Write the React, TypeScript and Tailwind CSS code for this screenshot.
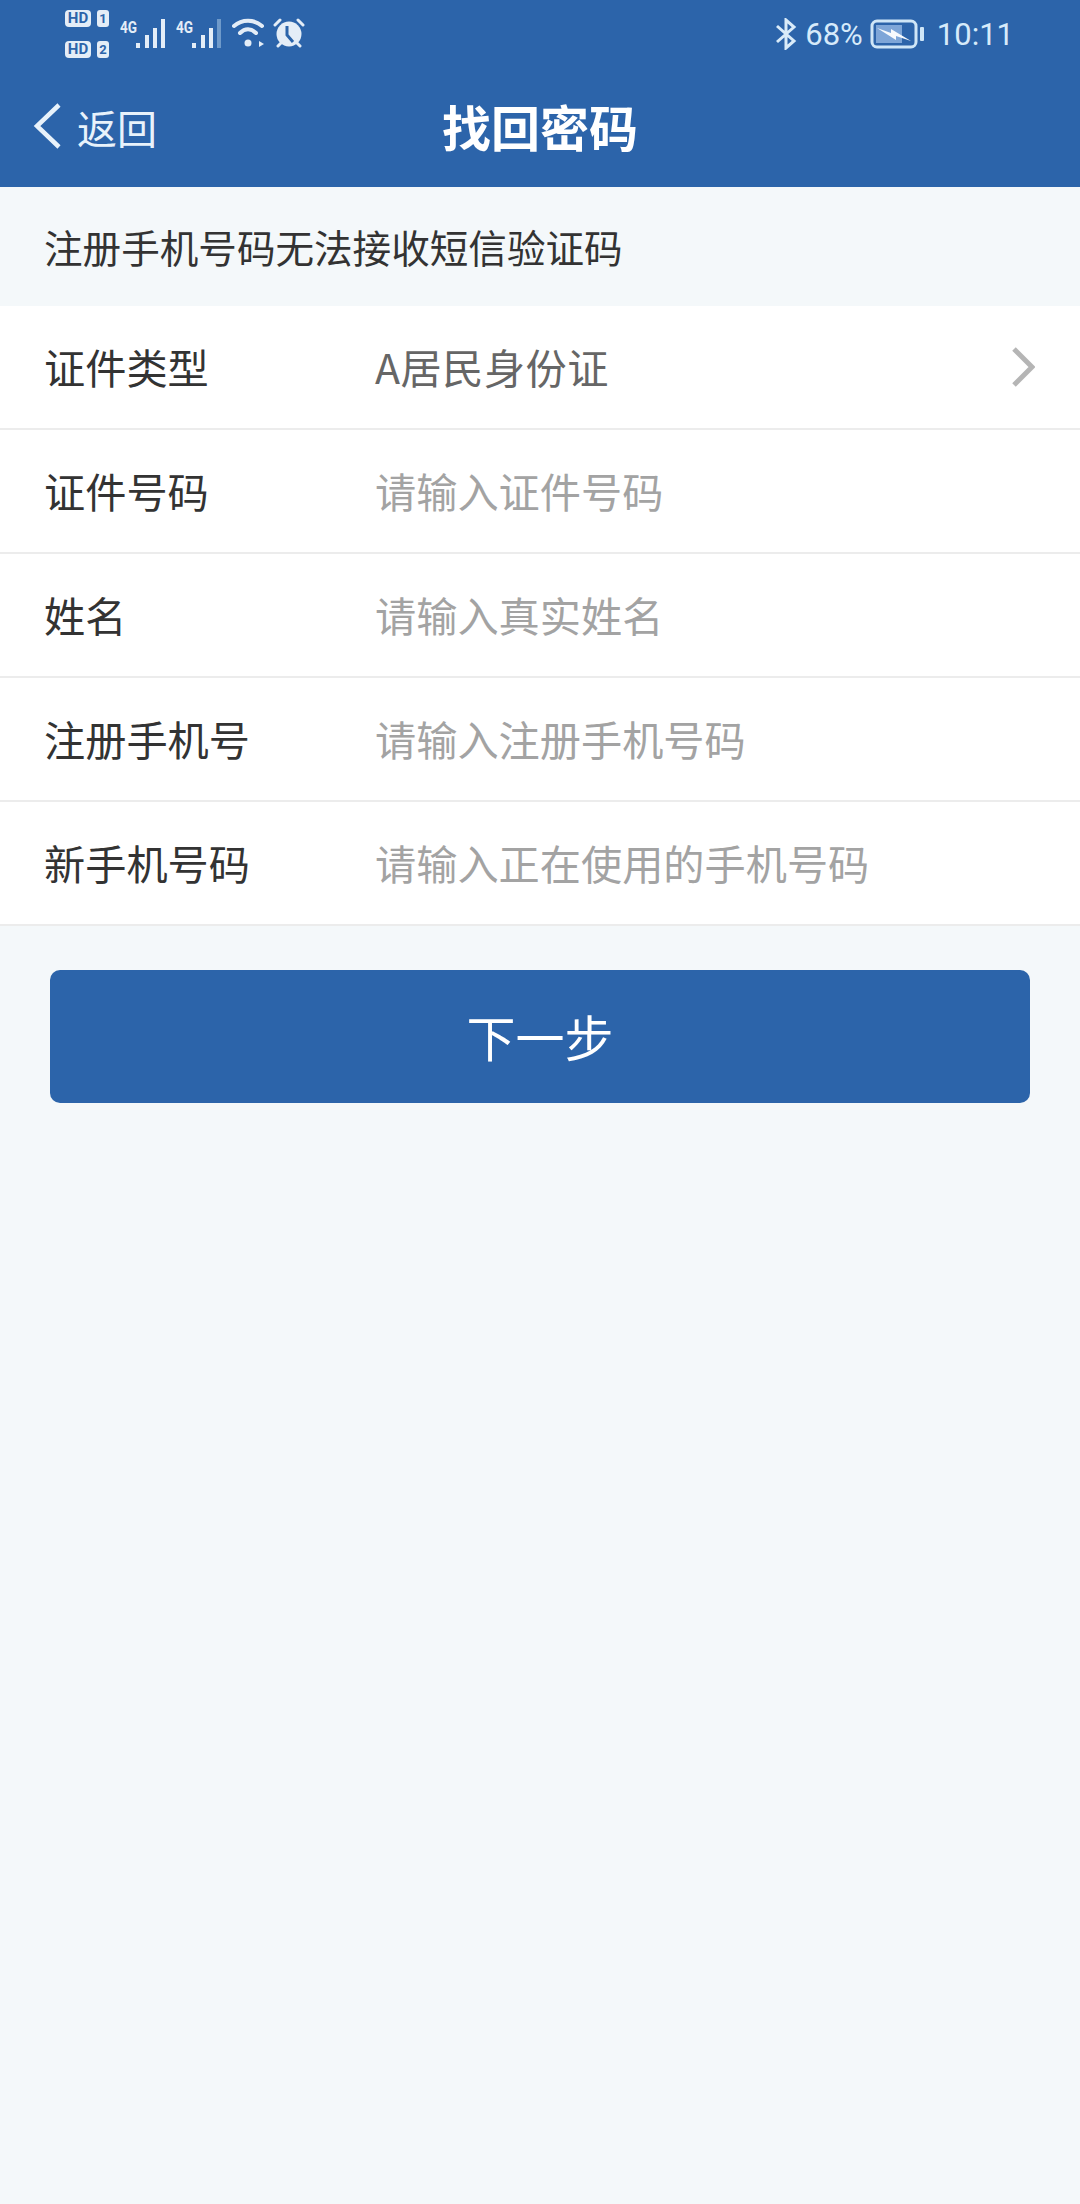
const FONT = "font-['Noto_Sans_CJK_SC','Noto_Sans',sans-serif]";

function Badge({ hd, n }: { hd: string; n: string }) {
  return (
    <div className="flex items-center gap-[6px]">
      <span className="flex h-[17px] w-[26px] items-center justify-center rounded-[4px] bg-[#e4edf7] font-['Roboto',sans-serif] text-[15px] font-bold leading-none text-[#2c64aa]">{hd}</span>
      <span className="flex h-[17px] w-[12px] items-center justify-center rounded-[3px] bg-[#e4edf7] font-['Roboto',sans-serif] text-[13px] font-bold leading-none text-[#2c64aa]">{n}</span>
    </div>
  );
}

function Signal({ faded }: { faded?: boolean }) {
  return (
    <div className="relative h-[30px] w-[56px]">
      <span className="absolute left-0 top-0 origin-top-left scale-x-[0.8] font-['Roboto',sans-serif] text-[17px] font-bold leading-none text-[#e4edf7]">4G</span>
      <svg className="absolute left-[16px] top-0" width="30" height="29" viewBox="0 0 30 29">
        <rect x="0" y="24" width="4" height="5" fill="#e4edf7" />
        <rect x="9" y="16" width="4" height="13" fill="#e4edf7" />
        <rect x="17" y="9" width="4" height="20" fill="#e4edf7" />
        <rect x="25" y="0" width="4" height="29" fill={faded ? "#6f9aca" : "#e4edf7"} />
      </svg>
    </div>
  );
}

function Row({ label, value, placeholder, chevron }: { label: string; value?: string; placeholder?: string; chevron?: boolean }) {
  return (
    <div className="flex h-[124px] items-center border-b-2 border-[#ececec] pl-[44px] pr-[45px]">
      <span className="w-[331px] text-[41.2px] leading-none text-[#333333]">{label}</span>
      {value ? <span className="flex-1 text-[41.2px] tracking-[0.5px] leading-none text-[#666666]">{value}</span> : <span className="flex-1 text-[41.2px] leading-none text-[#a3a3a3]">{placeholder}</span>}
      {chevron && (
        <svg width="24" height="40" viewBox="0 0 24 40" fill="none" stroke="#b5b5b5" strokeWidth="5">
          <path d="M3 2 L21 20 L3 38" />
        </svg>
      )}
    </div>
  );
}

export default function App() {
  return (
    <div className={`${FONT} flex h-[2204px] w-[1080px] flex-col bg-[#f4f8fa]`}>
      <header className="h-[187px] bg-[#2c64aa] text-[#e8f2fb]">
        <div className="flex h-[64px] items-start justify-between pl-[65px] pr-[66px]">
          <div className="flex items-start pt-[10px]">
            <div className="flex flex-col gap-[14px]">
              <Badge hd="HD" n="1" />
              <Badge hd="HD" n="2" />
            </div>
            <div className="ml-[11px] flex pt-[9px]">
              <Signal />
              <Signal faded />
            </div>
            <svg className="mt-[8px]" width="33" height="30" viewBox="0 0 33 30" fill="none" stroke="#e4edf7" strokeWidth="4" strokeLinecap="round">
              <path d="M2 8 C10 1 22 1 30 8" />
              <path d="M8 15 C13 10 19 10 24 15" />
              <circle cx="16" cy="25" r="3.5" fill="#e4edf7" stroke="none" />
              <path d="M27 23 L27 29 L32 26 Z" fill="#e4edf7" stroke="none" />
            </svg>
            <svg className="ml-[8px] mt-[8px]" width="32" height="30" viewBox="0 0 32 30">
              <circle cx="16" cy="16" r="12.5" fill="#e4edf7" />
              <path d="M14 8 L14 17 L20 24" fill="none" stroke="#2c64aa" strokeWidth="3" />
              <path d="M2 7 L7 2 M30 7 L25 2 M5 28 L8 25 M27 28 L24 25" stroke="#e4edf7" strokeWidth="3" strokeLinecap="round" />
            </svg>
          </div>
          <div className="flex items-center pt-[18px] font-['Roboto',sans-serif] text-[31px] leading-none text-[#d6eafa]">
            <svg width="22" height="32" viewBox="0 0 22 32" fill="none" stroke="#d9ebf9" strokeWidth="3">
              <path d="M2 8 L19 23 L11 30 L11 2 L19 9 L2 24" />
            </svg>
            <span className="ml-[8px]">68%</span>
            <svg className="ml-[7px]" width="56" height="30" viewBox="0 0 56 30">
              <rect x="2" y="2" width="44" height="26" rx="5" fill="none" stroke="#cfe6f7" strokeWidth="3" />
              <rect x="6" y="6" width="26" height="18" fill="#7ea6d8" />
              <path d="M7 9 L21 14 L21 10 L41 22 L26 17 L26 21 Z" fill="#f7fafd" />
              <rect x="50" y="8" width="4" height="14" rx="1" fill="#cfe6f7" />
            </svg>
            <span className="ml-[11px] text-[31px]">10:11</span>
          </div>
        </div>
        <div className="relative flex h-[123px] items-center">
          <svg className="ml-[32px]" width="30" height="48" viewBox="0 0 30 48" fill="none" stroke="#e8f2fb" strokeWidth="4.5">
            <path d="M27 3 L5 24 L27 45" />
          </svg>
          <span className="ml-[15px] pt-[2px] text-[40px] leading-none">返回</span>
          <h1 className="absolute left-0 right-0 text-center text-[49px] font-bold leading-none text-white">找回密码</h1>
        </div>
      </header>

      <div className="flex h-[119px] items-center pl-[44px] text-[38.6px] leading-none text-[#333333]">
        注册手机号码无法接收短信验证码
      </div>

      <div className="bg-white">
        <Row label="证件类型" value="A居民身份证" chevron />
        <Row label="证件号码" placeholder="请输入证件号码" />
        <Row label="姓名" placeholder="请输入真实姓名" />
        <Row label="注册手机号" placeholder="请输入注册手机号码" />
        <Row label="新手机号码" placeholder="请输入正在使用的手机号码" />
      </div>

      <div className="px-[50px] pt-[44px]">
        <button className="flex h-[133px] w-full items-center justify-center rounded-[10px] bg-[#2c64aa] pb-[2px] text-[49px] leading-none text-white">下一步</button>
      </div>
    </div>
  );
}
